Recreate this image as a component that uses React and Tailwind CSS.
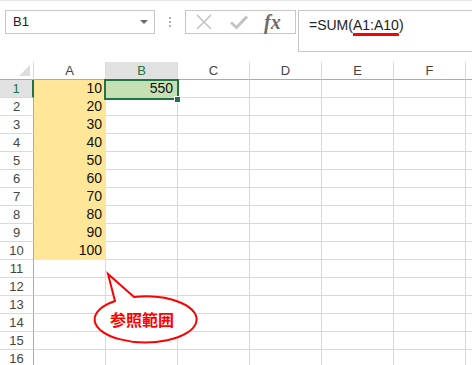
const cols = ["A", "B", "C", "D", "E", "F"];
const values = [10, 20, 30, 40, 50, 60, 70, 80, 90, 100];
const rows = Array.from({ length: 16 }, (_, i) => i + 1);

/* ================= ICONS ================= */
const CancelIcon = () => (
  <svg width="18" height="16" viewBox="0 0 18 16">
    <path d="M2 1L16 15M16 1L2 15" stroke="#c4c4c4" strokeWidth="1.6" fill="none" />
  </svg>
);

const EnterIcon = () => (
  <svg width="20" height="16" viewBox="0 0 20 16">
    <path d="M2 8.5L7.5 13.5L18 2.5" stroke="#c2c2c2" strokeWidth="3" fill="none" />
  </svg>
);

const CornerIcon = () => (
  <svg className="absolute right-[3px] bottom-[3px]" width="11" height="11" viewBox="0 0 11 11">
    <polygon points="11,0 11,11 0,11" fill="#dcdcdc" />
  </svg>
);

const Callout = () => (
  <svg className="absolute left-0 top-0" width="472" height="365" viewBox="0 0 472 365">
    <path
      d="M115 300 L108 273 L134 296 A51 23 0 1 1 115 300 Z"
      fill="#ffffff"
      stroke="#ff0000"
      strokeWidth="2"
    />
  </svg>
);

/* ================= GRID ================= */
const Cell = ({ row, col }) => {
  if (col === "A" && row <= 10) {
    return (
      <div className="h-[18px] border-r border-b border-[#ffe699] bg-[#ffe699] flex items-center justify-end pr-[3px] text-[14px] text-[#111]">
        {values[row - 1]}
      </div>
    );
  }
  if (col === "B" && row === 1) {
    return (
      <div className="h-[18px] border-r border-b border-[#c6e0b4] bg-[#c6e0b4] flex items-center justify-end pr-[4px] text-[14px] text-[#111]">
        550
      </div>
    );
  }
  return <div className="h-[18px] border-r border-b border-[#d9d9d9]" />;
};

export default function App() {
  return (
    <div className="relative w-[472px] h-[365px] overflow-hidden bg-white border-t border-[#e6e6e6] font-['Liberation_Sans',sans-serif]">
      {/* toolbar */}
      <div className="h-[61px] flex items-start pt-[9px] pl-[5px]">
        <div className="shrink-0 w-[150px] h-[24px] border border-[#c6c6c6] flex items-center justify-between pl-[7px] pr-[6px] text-[13px] text-[#222]">
          <span>B1</span>
          <span className="w-0 h-0 border-l-[4px] border-r-[4px] border-t-[4px] border-l-transparent border-r-transparent border-t-[#6a6a6a]" />
        </div>
        <div className="shrink-0 w-[30px] h-[24px] flex flex-col items-center justify-center gap-[2px]">
          <span className="w-[2px] h-[2px] bg-[#b0b0b0]" />
          <span className="w-[2px] h-[2px] bg-[#b0b0b0]" />
          <span className="w-[2px] h-[2px] bg-[#b0b0b0]" />
        </div>
        <div className="shrink-0 w-[111px] h-[24px] border border-[#c6c6c6] flex items-center pl-[9px]">
          <CancelIcon />
          <span className="ml-[16px]"><EnterIcon /></span>
          <span className="ml-[15px] font-['Liberation_Serif',serif] italic font-bold text-[20px] leading-none text-[#6b6b6b]">fx</span>
        </div>
        <div className="shrink-0 ml-[2px] w-[190px] h-[42px] border border-[#c6c6c6] pl-[10px] pt-[4px] text-[14px] text-[#222]">
          =SUM(
          <span className="underline decoration-[#ff0000] decoration-[3px] underline-offset-[3px]">A1:A10</span>)
        </div>
      </div>

      {/* sheet */}
      <div className="grid grid-cols-[34px_repeat(6,72px)_1fr]">
        <div className="relative h-[18px] border-r border-b border-r-[#d9d9d9] border-b-[#ababab]">
          <CornerIcon />
        </div>
        {cols.map(c => (
          <div
            key={c}
            className={`h-[18px] border-r border-b border-r-[#d9d9d9] border-b-[#ababab] flex items-center justify-center text-[13px] ${c === "B" ? "bg-[#e1e1e1] text-[#217346]" : "bg-white text-[#444]"}`}
          >
            {c}
          </div>
        ))}
        <div className="h-[18px] border-b border-[#ababab]" />

        {rows.map(r => (
          <div key={r} className="contents">
            <div
              className={`h-[18px] border-b border-[#d9d9d9] flex items-center justify-center text-[13px] ${r === 1 ? "bg-[#e1e1e1] text-[#217346] border-r-2 border-r-[#217346]" : "border-r border-r-[#ababab] text-[#444]"}`}
            >
              {r}
            </div>
            {cols.map(c => (
              <Cell key={c} row={r} col={c} />
            ))}
            <div className="h-[18px] border-b border-[#d9d9d9]" />
          </div>
        ))}
      </div>

      {/* selection box on B1 */}
      <div className="absolute left-[104px] top-[78px] w-[75px] h-[21px] border-2 border-[#217346]" />
      <div className="absolute left-[174px] top-[95px] w-[7px] h-[7px] bg-[#217346] border border-white" />

      {/* callout */}
      <Callout />
      <div className="absolute left-[91px] top-[306px] w-[102px] text-center text-[16px] leading-[24px] font-bold text-[#ff0000] font-['Noto_Sans_CJK_JP',sans-serif]">
        参照範囲
      </div>
    </div>
  );
}
